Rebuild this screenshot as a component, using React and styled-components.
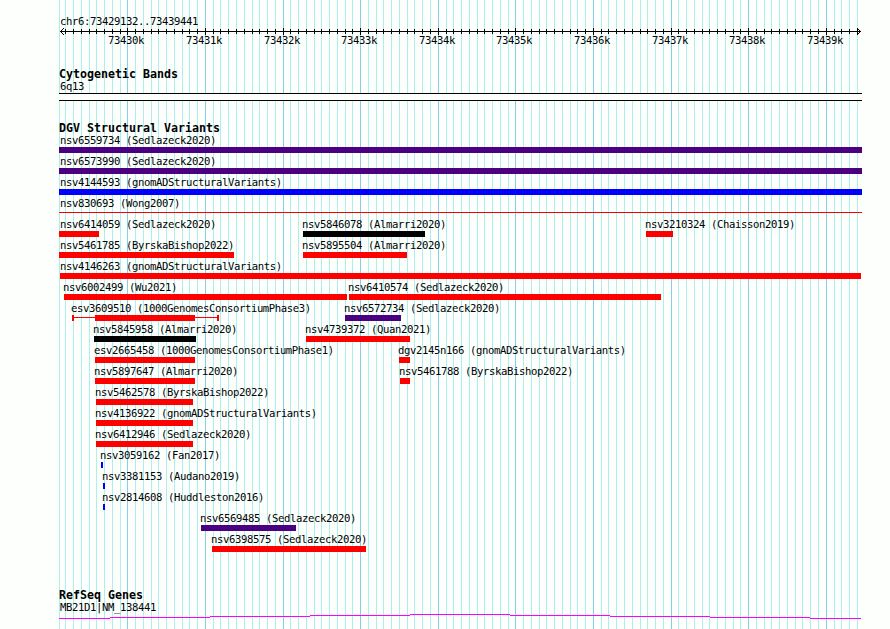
import React from 'react';
import styled, { createGlobalStyle } from 'styled-components';

const START = 73429132;
const END = 73439441;
const INDIGO = '#4b0082';
const RED = '#ff0000';
const BLUE = '#0000ff';
const BLACK = '#000000';

const toX = (base) => Math.round(60 + ((base - START) * 800) / (END - START));

const ticks = [];
for (let base = 73429200; base <= END; base += 100) {
  ticks.push({ base, x: toX(base), major: base % 1000 === 0 });
}
const majors = ticks.filter((t) => t.major);

/* [name, bar start, bar end, colour, options] */
const rows = [
  [['nsv6559734 (Sedlazeck2020)', 59, 862, INDIGO]],
  [['nsv6573990 (Sedlazeck2020)', 59, 862, INDIGO]],
  [['nsv4144593 (gnomADStructuralVariants)', 59, 862, BLUE]],
  [['nsv830693 (Wong2007)', 59, 862, RED, { thin: true }]],
  [
    ['nsv6414059 (Sedlazeck2020)', 59, 99, RED],
    ['nsv5846078 (Almarri2020)', 303, 425, BLACK],
    ['nsv3210324 (Chaisson2019)', 646, 673, RED],
  ],
  [
    ['nsv5461785 (ByrskaBishop2022)', 59, 234, RED],
    ['nsv5895504 (Almarri2020)', 303, 407, RED],
  ],
  [['nsv4146263 (gnomADStructuralVariants)', 60, 861, RED]],
  [
    ['nsv6002499 (Wu2021)', 64, 347, RED],
    ['nsv6410574 (Sedlazeck2020)', 349, 661, RED],
  ],
  [
    ['esv3609510 (1000GenomesConsortiumPhase3)', 72, 219, RED, { box: [95, 195] }],
    ['nsv6572734 (Sedlazeck2020)', 345, 401, INDIGO],
  ],
  [
    ['nsv5845958 (Almarri2020)', 94, 196, BLACK],
    ['nsv4739372 (Quan2021)', 306, 410, RED],
  ],
  [
    ['esv2665458 (1000GenomesConsortiumPhase1)', 95, 195, RED],
    ['dgv2145n166 (gnomADStructuralVariants)', 399, 410, RED],
  ],
  [
    ['nsv5897647 (Almarri2020)', 95, 195, RED],
    ['nsv5461788 (ByrskaBishop2022)', 400, 410, RED],
  ],
  [['nsv5462578 (ByrskaBishop2022)', 96, 193, RED]],
  [['nsv4136922 (gnomADStructuralVariants)', 96, 193, RED]],
  [['nsv6412946 (Sedlazeck2020)', 96, 193, RED]],
  [['nsv3059162 (Fan2017)', 101, 103, BLUE]],
  [['nsv3381153 (Audano2019)', 103, 105, BLUE]],
  [['nsv2814608 (Huddleston2016)', 103, 105, BLUE]],
  [['nsv6569485 (Sedlazeck2020)', 201, 296, INDIGO]],
  [['nsv6398575 (Sedlazeck2020)', 212, 366, RED]],
];

const GlobalStyle = createGlobalStyle`
  html, body { margin: 0; padding: 0; background: #fdfffc; overflow: hidden; }
`;

const Page = styled.main`
  position: relative;
  isolation: isolate;
  width: 890px;
  height: 629px;
  overflow: hidden;
  color: #000;
  background: #fdfffc;
  font-family: 'DejaVu Sans Mono', monospace;
`;

const GridLines = styled.svg`
  position: absolute;
  inset: 0;
  z-index: -1;
  display: block;
`;

const Label = styled.div`
  height: 13px;
  font-size: 10.6px;
  line-height: 13px;
  letter-spacing: -0.382px;
  white-space: pre;
`;

const Heading = styled.h2`
  margin: 0 0 0 59px;
  height: 13px;
  font-size: 11.63px;
  line-height: 13px;
  font-weight: 700;
  white-space: pre;
`;

const Ruler = styled.header`
  height: 68px;
  box-sizing: border-box;
  padding-top: 15px;
`;

const RangeLabel = styled(Label)`
  margin-left: 60px;
`;

const Axis = styled.svg`
  display: block;
  height: 7px;
`;

const AxisLabels = styled.div`
  display: grid;
  margin-top: -1px;
`;

const AxisLabel = styled(Label)`
  grid-area: 1 / 1;
  margin-left: ${(p) => p.$x - 19}px;
`;

const BandTrack = styled.section`
  height: 54px;
`;

const BandBox = styled.div`
  box-sizing: border-box;
  margin: 0 0 0 59px;
  width: 803px;
  height: 8px;
  border: solid #000;
  border-width: 1px 0;
  background: #fdfffc;
`;

const VariantTrack = styled.section`
  height: 467px;
`;

const VariantRows = styled.div`
  margin-top: -3px;
`;

const Row = styled.div`
  display: grid;
  height: 21px;
`;

const Feature = styled.div`
  grid-area: 1 / 1;
  justify-self: start;
  margin-left: ${(p) => p.$x}px;
  padding-top: 2px;
`;

const FeatureLabel = styled(Label)`
  margin-left: ${(p) => p.$shift}px;
`;

const Bar = styled.div`
  width: ${(p) => p.$w}px;
  height: ${(p) => (p.$thin ? 1 : 6)}px;
  margin-top: ${(p) => (p.$thin ? 2 : 0)}px;
  background: ${(p) => p.$color};
`;

const Whisker = styled.div`
  box-sizing: border-box;
  display: flex;
  width: ${(p) => p.$w}px;
  height: 6px;
  padding-left: ${(p) => p.$inset - 2}px;
  border: solid ${(p) => p.$color};
  border-width: 0 2px;
  background: linear-gradient(${(p) => p.$color}, ${(p) => p.$color}) 0 2px / 100% 1px no-repeat;
`;

const GeneTrack = styled.section`
  height: 40px;
`;

const GeneLabel = styled(Label)`
  margin: -1px 0 0 60px;
`;

const GeneLine = styled.svg`
  display: block;
`;

function labelShift(from) {
  if (from === 59) return 1;
  return from === 60 ? 0 : -1;
}

function Variant({ data }) {
  const [name, from, to, color, opts = {}] = data;
  return (
    <Feature $x={from}>
      <FeatureLabel $shift={labelShift(from)}>{name}</FeatureLabel>
      {opts.box ? (
        <Whisker $w={to - from} $inset={opts.box[0] - from} $color={color}>
          <Bar $w={opts.box[1] - opts.box[0]} $color={color} />
        </Whisker>
      ) : (
        <Bar $w={to - from} $thin={opts.thin} $color={color} />
      )}
    </Feature>
  );
}

export default function App() {
  return (
    <Page>
      <GlobalStyle />
      <GridLines width="890" height="629" shapeRendering="crispEdges">
        <rect x="59" y="0" width="1" height="629" fill="#afeeee" />
        {ticks.map((t) => (
          <rect key={t.base} x={t.x} y="0" width="1" height="629" fill={t.major ? '#87ceeb' : '#afeeee'} />
        ))}
      </GridLines>

      <Ruler>
        <RangeLabel>chr6:73429132..73439441</RangeLabel>
        <Axis width="890" height="7" shapeRendering="crispEdges">
          <rect x="60" y="3" width="801" height="1" />
          {ticks.map((t) => (
            <rect key={t.base} x={t.x} y={t.major ? 0 : 1} width="1" height={t.major ? 7 : 5} />
          ))}
          {[1, 2, 3].map((d) => (
            <React.Fragment key={d}>
              <rect x={60 + d} y={3 - d} width="1" height="1" />
              <rect x={60 + d} y={3 + d} width="1" height="1" />
              <rect x={860 - d} y={3 - d} width="1" height="1" />
              <rect x={860 - d} y={3 + d} width="1" height="1" />
            </React.Fragment>
          ))}
        </Axis>
        <AxisLabels>
          {majors.map((t) => (
            <AxisLabel key={t.base} $x={t.x}>{`${t.base / 1000}k`}</AxisLabel>
          ))}
        </AxisLabels>
      </Ruler>

      <BandTrack>
        <Heading>Cytogenetic Bands</Heading>
        <GeneLabel>6q13</GeneLabel>
        <BandBox />
      </BandTrack>

      <VariantTrack>
        <Heading>DGV Structural Variants</Heading>
        <VariantRows>
          {rows.map((row, i) => (
            <Row key={i}>
              {row.map((v) => (
                <Variant key={v[0]} data={v} />
              ))}
            </Row>
          ))}
        </VariantRows>
      </VariantTrack>

      <GeneTrack>
        <Heading>RefSeq Genes</Heading>
        <GeneLabel>MB21D1|NM_138441</GeneLabel>
        <GeneLine width="890" height="15" shapeRendering="crispEdges">
          {[
            [59, 110, 4], [110, 210, 3], [210, 310, 2], [310, 410, 1], [410, 510, 0],
            [510, 610, 1], [610, 710, 2], [710, 810, 3], [810, 861, 4],
          ].map(([a, b, y]) => (
            <rect key={a} x={a} y={y} width={b - a} height="1" fill="#ff00ff" />
          ))}
        </GeneLine>
      </GeneTrack>
    </Page>
  );
}
